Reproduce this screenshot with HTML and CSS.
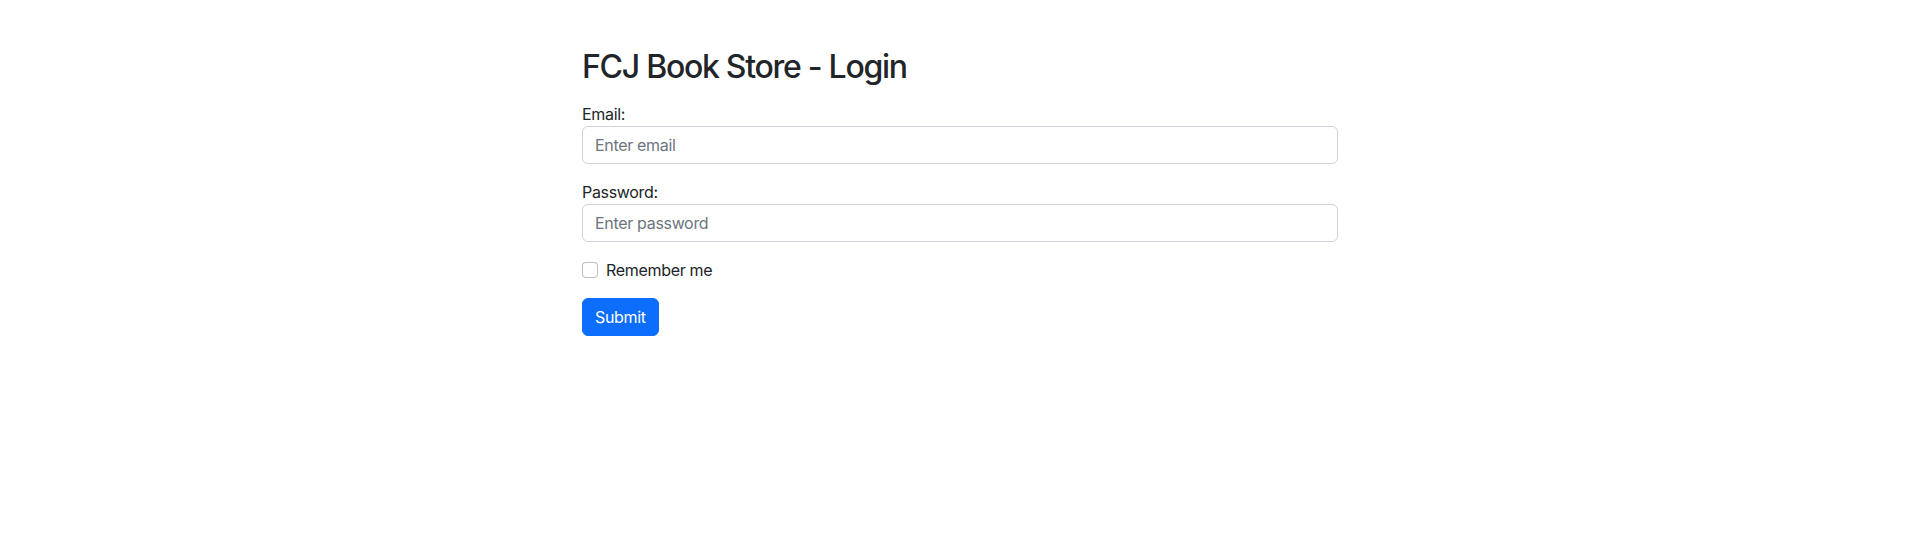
FILE: index.html
```html
<!DOCTYPE html>
<html lang="en">
<head>
<meta charset="utf-8">
<title>FCJ Book Store - Login</title>
<link rel="stylesheet" href="styles.css">
</head>
<body>
<main class="container">
  <h2 class="title">FCJ Book Store - Login</h2>
  <form class="login-form">
    <div class="field">
      <label for="email">Email:</label>
      <input type="email" id="email" class="form-control" placeholder="Enter email">
    </div>
    <div class="field">
      <label for="pwd">Password:</label>
      <input type="password" id="pwd" class="form-control" placeholder="Enter password">
    </div>
    <div class="form-check">
      <input type="checkbox" id="remember" class="form-check-input">
      <label for="remember" class="form-check-label">Remember me</label>
    </div>
    <button type="submit" class="btn-primary">Submit</button>
  </form>
</main>
</body>
</html>
```
FILE: styles.css
```css
* { box-sizing: border-box; }
html, body {
  margin: 0;
  background: #fff;
}
body {
  font-family: Inter, Roboto, "Liberation Sans", sans-serif;
  font-size: 16px;
  line-height: 1.5;
  letter-spacing: -0.02em;
  color: #212529;
}
.container {
  width: 756px;
  margin: 0 auto;
  padding-top: 48px;
}
.title {
  font-size: 32px;
  font-weight: 500;
  line-height: 1.2;
  letter-spacing: -0.04em;
  margin: 0 0 16px;
}
.login-form {
  margin: 0;
}
.field {
  margin-bottom: 16px;
}
.field label {
  display: inline-block;
}
.form-control {
  display: block;
  width: 100%;
  height: 38px;
  padding: 6px 12px;
  font-family: inherit;
  font-size: 16px;
  line-height: 1.5;
  letter-spacing: inherit;
  color: #212529;
  background: #fff;
  border: 1px solid #ced4da;
  border-radius: 6px;
  outline: none;
}
.form-control::placeholder {
  color: #6c757d;
  opacity: 1;
}
.form-check {
  display: block;
  min-height: 24px;
  padding-left: 24px;
  margin-bottom: 16px;
}
.form-check-input {
  appearance: none;
  -webkit-appearance: none;
  float: left;
  width: 16px;
  height: 16px;
  margin: 4px 0 0 -24px;
  border: 1px solid rgba(0, 0, 0, 0.25);
  border-radius: 4px;
  background: #fff;
}
.btn-primary {
  display: inline-block;
  height: 38px;
  padding: 6px 12px;
  font-family: inherit;
  font-size: 16px;
  line-height: 1.5;
  letter-spacing: inherit;
  color: #fff;
  background: #0d6efd;
  border: 1px solid #0d6efd;
  border-radius: 6px;
  cursor: pointer;
}
```
